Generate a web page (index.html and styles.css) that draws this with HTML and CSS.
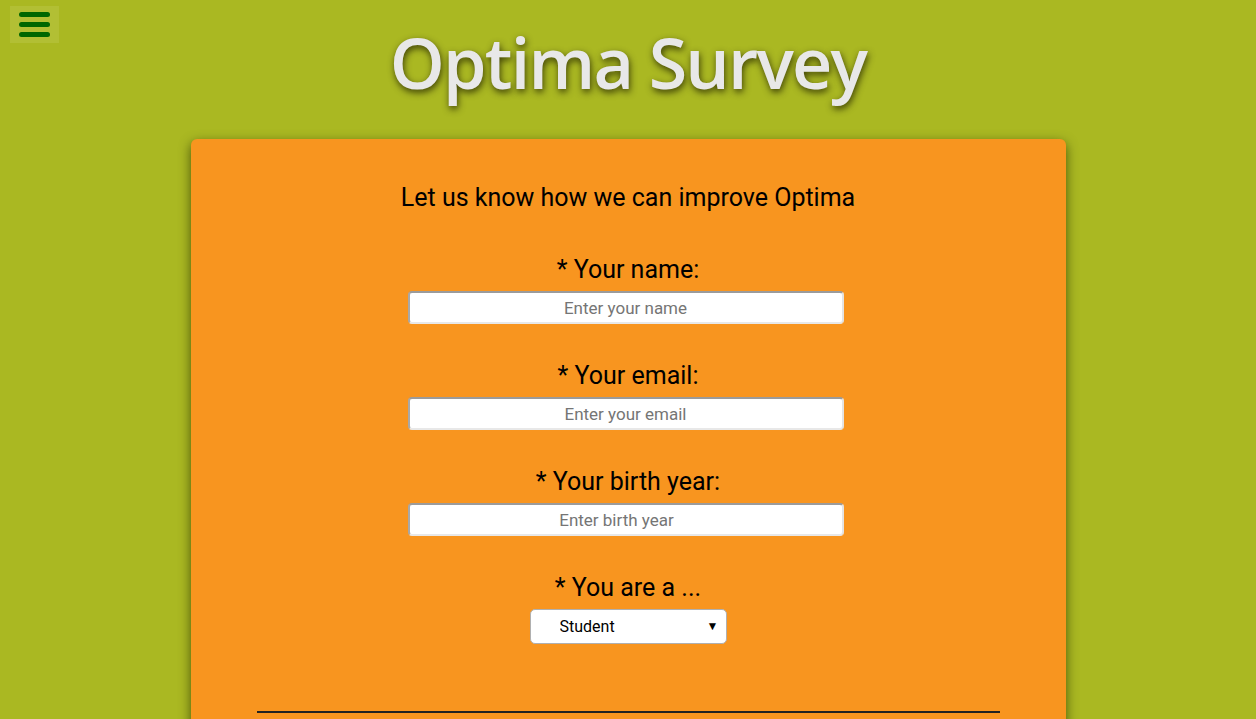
FILE: index.html
```html
<!DOCTYPE html>
<html lang="en">
<head>
<meta charset="utf-8">
<title>Optima Survey</title>
<link rel="stylesheet" href="styles.css">
</head>
<body>
<button class="menu-btn" aria-label="Menu">
  <span class="bar"></span><span class="bar"></span><span class="bar"></span>
</button>
<header class="header">
  <h1 class="title">Optima Survey</h1>
</header>
<main class="card">
  <p class="intro">Let us know how we can improve Optima</p>
  <form class="form">
    <div class="group">
      <label class="label" for="name">* Your name:</label>
      <input class="field" id="name" type="text" placeholder="Enter your name">
    </div>
    <div class="group">
      <label class="label" for="email">* Your email:</label>
      <input class="field" id="email" type="email" placeholder="Enter your email">
    </div>
    <div class="group">
      <label class="label" for="year">* Your birth year:</label>
      <input class="field field-num" id="year" type="text" placeholder="Enter birth year">
    </div>
    <div class="group">
      <label class="label" for="role">* You are a ...</label>
      <div class="select-wrap">
        <select class="select" id="role">
          <option>Student</option>
          <option>Teacher</option>
          <option>Other</option>
        </select>
        <span class="arrow">&#9660;</span>
      </div>
    </div>
    <hr class="divider">
  </form>
</main>
</body>
</html>
```
FILE: styles.css
```css
html, body {
  margin: 0;
  padding: 0;
}
body {
  background: #aab822;
  font-family: Roboto, "Liberation Sans", sans-serif;
  height: 719px;
  overflow: hidden;
}
.menu-btn {
  position: absolute;
  left: 10px;
  top: 6px;
  width: 49px;
  height: 37px;
  background: #b2bf34;
  border: none;
  padding: 0;
  display: flex;
  flex-direction: column;
  align-items: center;
  justify-content: center;
  gap: 5px;
}
.bar {
  display: block;
  width: 31px;
  height: 5px;
  border-radius: 3px;
  background: #006600;
}
.header {
  text-align: center;
  padding-top: 19px;
  height: 139px;
  box-sizing: border-box;
}
.title {
  margin: 0;
  font-family: "Open Sans", sans-serif;
  font-weight: 600;
  font-size: 70px;
  line-height: 86px;
  color: #e8e8e8;
  text-shadow: 1px 3px 7px rgba(40, 40, 0, 0.85);
  letter-spacing: -1.8px;
}
.card {
  width: 875px;
  margin: 0 auto;
  box-sizing: border-box;
  background: #f8951f;
  border-radius: 6px;
  box-shadow: 0 4px 12px rgba(40, 50, 0, 0.75);
  padding: 42px 66px 200px;
  text-align: center;
}
.intro {
  margin: 0;
  font-size: 25px;
  line-height: 34px;
  color: #000;
}
.form {
  display: flex;
  flex-direction: column;
  align-items: center;
  margin-top: 41px;
}
.group {
  display: flex;
  flex-direction: column;
  align-items: center;
  margin-bottom: 38px;
}
.label {
  font-size: 25px;
  line-height: 28px;
  color: #000;
  margin-bottom: 7px;
}
.field {
  width: 436px;
  height: 33px;
  box-sizing: border-box;
  border-style: solid;
  border-width: 2px;
  border-color: #9b9b9b #e4e4e4 #e8e8e8 #a8a8a8;
  border-radius: 4px;
  background: #fff;
  text-align: center;
  font-family: Roboto, sans-serif;
  font-size: 17px;
  padding: 0 4px;
  outline: none;
  margin-left: -5px;
}
.field-num {
  padding-right: 22px;
}
.field::placeholder {
  color: #757575;
}
.select-wrap {
  position: relative;
}
.select {
  display: block;
  appearance: none;
  -webkit-appearance: none;
  width: 197px;
  height: 35px;
  box-sizing: border-box;
  border: 1px solid #b0b0b0;
  border-radius: 5px;
  background: #fff;
  font-family: Roboto, sans-serif;
  font-size: 16px;
  color: #000;
  padding-left: 29px;
}
.arrow {
  position: absolute;
  right: 8px;
  top: 11px;
  font-size: 12px;
  line-height: 13px;
  color: #000;
  pointer-events: none;
}
.divider {
  width: 743px;
  height: 2px;
  border: none;
  background: #222;
  margin: 29px 0 0;
}
```
